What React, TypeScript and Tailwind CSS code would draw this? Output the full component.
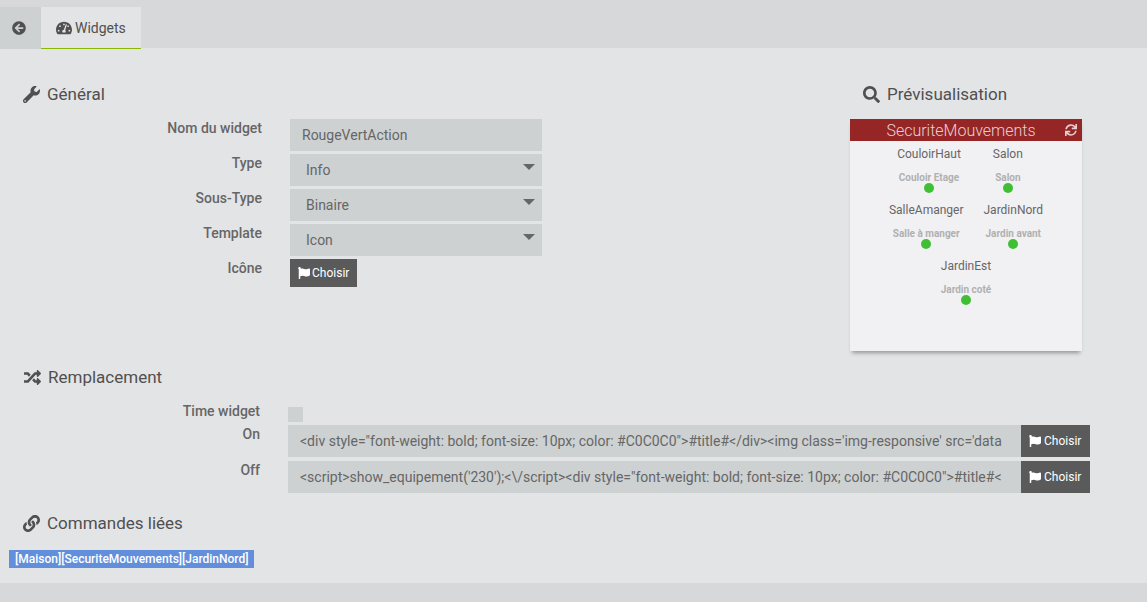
import { useState } from "react";
import type { ReactNode } from "react";
import {
    FaArrowCircleLeft,
    FaFlag,
    FaLink,
    FaRandom,
    FaSearch,
    FaSync,
    FaTachometerAlt,
    FaWrench,
} from "react-icons/fa";

const SELECTS = [
    { id: "type", label: "Type", options: ["Info", "Action"] },
    { id: "subtype", label: "Sous-Type", options: ["Binaire", "Numérique", "Autre"] },
    { id: "template", label: "Template", options: ["Icon", "Image"] },
];

const REPLACEMENTS = [
    {
        id: "on",
        label: "On",
        value: `<div style="font-weight: bold; font-size: 10px; color: #C0C0C0">#title#</div><img class='img-responsive' src='data`,
    },
    {
        id: "off",
        label: "Off",
        value: `<script>show_equipement('230');<\\/script><div style="font-weight: bold; font-size: 10px; color: #C0C0C0">#title#<`,
    },
];

const SENSORS = [
    [
        { name: "CouloirHaut", room: "Couloir Etage" },
        { name: "Salon", room: "Salon" },
    ],
    [
        { name: "SalleAmanger", room: "Salle à manger" },
        { name: "JardinNord", room: "Jardin avant" },
    ],
    [{ name: "JardinEst", room: "Jardin coté" }],
];

function Legend({ icon, children }: { icon: ReactNode; children: ReactNode }) {
    return (
        <h2 className="flex h-8 items-center gap-[7px] text-[17px] text-[#505050]">
            {icon}
            {children}
        </h2>
    );
}

function ChooseButton({ className }: { className: string }) {
    return (
        <button
            type="button"
            className={`flex shrink-0 items-center bg-[#5a5a5a] px-2 text-xs text-white ${className}`}
        >
            <FaFlag className="size-3" />
            Choisir
        </button>
    );
}

function Row({ id, label, children }: { id: string; label: string; children: ReactNode }) {
    return (
        <div className="grid grid-cols-[262fr_560fr] gap-x-7">
            <label htmlFor={id} className="text-right font-medium leading-[18px]">
                {label}
            </label>
            {children}
        </div>
    );
}

function SelectBox({ id, options }: { id: string; options: string[] }) {
    return (
        <div className="relative w-63">
            <select id={id} className="h-8 w-full appearance-none bg-[#cdd1d2] px-4">
                {options.map((o) => (
                    <option key={o}>{o}</option>
                ))}
            </select>
            <svg
                viewBox="0 0 12 6"
                className="pointer-events-none absolute right-[7px] top-2.5 h-1.5 w-3 fill-current"
            >
                <path d="M0 0h12L6 6z" />
            </svg>
        </div>
    );
}

function Preview() {
    return (
        <div className="h-58 w-58 bg-[#f1f1f4] shadow-[0_4px_4px_-2px_rgba(0,0,0,0.35)]">
            <div className="flex h-[22px] items-center bg-[#962626] text-[#e6d0d2]">
                <span className="flex-1 pl-[7px] pt-0.5 text-center text-base font-light leading-6">
                    SecuriteMouvements
                </span>
                <button type="button" aria-label="Rafraîchir" className="pr-[5px]">
                    <FaSync className="size-3" />
                </button>
            </div>
            {SENSORS.map((line, i) => (
                <div key={i} className="flex h-14 justify-center">
                    {line.map((s) => (
                        <div key={s.name} className="flex min-w-[74px] flex-col items-center px-2.5">
                            <span className="pt-[3px] text-xs leading-5">{s.name}</span>
                            <span className="pt-[9px] text-[10px] font-bold leading-[10px] text-[#b0b0b0]">
                                {s.room}
                            </span>
                            <span className="size-2.5 rounded-full bg-[#40bf35]" />
                        </div>
                    ))}
                </div>
            ))}
        </div>
    );
}

export default function App() {
    const [timeWidget, setTimeWidget] = useState(false);

    return (
        <div className="min-h-screen bg-[#d7d8da] font-[Roboto,sans-serif] text-sm text-[#666]">
            <nav className="flex h-12 items-start pt-[7px] text-[#505050]">
                <a href="#retour" aria-label="Retour" className="flex h-[42px] w-[41px] items-center bg-[#cdd1d2] pl-3">
                    <FaArrowCircleLeft className="size-3.5" />
                </a>
                <a
                    href="#widgets"
                    className="flex h-[42px] items-center gap-[3px] border-b border-[#8ab800] bg-[#e3e4e6] px-[15px]"
                >
                    <FaTachometerAlt className="size-4" />
                    Widgets
                </a>
            </nav>

            <main className="bg-[#e3e4e6] pb-[15px]">
                <div className="grid grid-cols-[850fr_297fr] pt-[30px]">
                    <section>
                        <div className="pl-[23px]">
                            <Legend icon={<FaWrench className="size-[17px]" />}>Général</Legend>
                        </div>
                        <div className="flex flex-col gap-[3px] pt-[9px]">
                            <Row id="name" label="Nom du widget">
                                <input id="name" defaultValue="RougeVertAction" className="h-8 w-63 bg-[#cdd1d2] px-3" />
                            </Row>
                            {SELECTS.map((s) => (
                                <Row key={s.id} id={s.id} label={s.label}>
                                    <SelectBox id={s.id} options={s.options} />
                                </Row>
                            ))}
                            <Row id="icon" label="Icône">
                                <div id="icon">
                                    <ChooseButton className="h-7 gap-0.5" />
                                </div>
                            </Row>
                        </div>
                    </section>
                    <section>
                        <div className="pl-[13px]">
                            <Legend icon={<FaSearch className="size-[17px]" />}>Prévisualisation</Legend>
                        </div>
                        <div className="pt-[9px]">
                            <Preview />
                        </div>
                    </section>
                </div>

                <section className="pt-[10px]">
                    <div className="pl-6">
                        <Legend icon={<FaRandom className="size-[17px]" />}>Remplacement</Legend>
                    </div>
                    <div className="flex flex-col gap-[3px] pr-[57px] pt-2">
                        <div className="grid grid-cols-[260fr_802fr] gap-x-7">
                            <label htmlFor="time" className="text-right font-medium leading-5">
                                Time widget
                            </label>
                            <input
                                id="time"
                                type="checkbox"
                                checked={timeWidget}
                                onChange={(e) => setTimeWidget(e.target.checked)}
                                className="mt-1.5 size-[15px] appearance-none bg-[#cdd1d2] checked:bg-[#8ab800]"
                            />
                        </div>
                        <div className="flex flex-col gap-1">
                            {REPLACEMENTS.map((r) => (
                                <div key={r.id} className="grid grid-cols-[260fr_802fr] gap-x-7">
                                    <label htmlFor={r.id} className="text-right font-medium leading-[18px]">
                                        {r.label}
                                    </label>
                                    <div className="flex">
                                        <input
                                            id={r.id}
                                            defaultValue={r.value}
                                            className="h-8 min-w-0 flex-1 bg-[#cdd1d2] px-3"
                                        />
                                        <ChooseButton className="h-8 w-[69px] gap-[3px]" />
                                    </div>
                                </div>
                            ))}
                        </div>
                    </div>
                </section>

                <section className="pt-3.5">
                    <div className="pl-[23px]">
                        <Legend icon={<FaLink className="size-[17px]" />}>Commandes liées</Legend>
                    </div>
                    <div className="flex pl-[9px] pt-[11px]">
                        <a href="#commande" className="bg-[#628fdb] px-1.5 text-xs font-medium leading-[18px] text-white">
                            [Maison][SecuriteMouvements][JardinNord]
                        </a>
                    </div>
                </section>
            </main>
        </div>
    );
}
